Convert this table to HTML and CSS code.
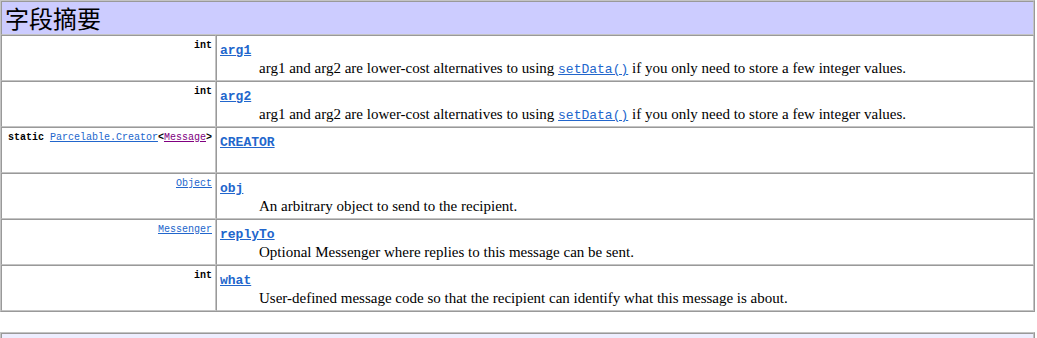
FILE: index.html
```html
<!DOCTYPE html>
<html lang="zh">
<head>
<meta charset="utf-8">
<title>字段摘要</title>
<link rel="stylesheet" href="styles.css">
</head>
<body>
<table class="summary">
  <tr class="head">
    <th colspan="2">字段摘要</th>
  </tr>
  <tr>
    <td class="type"><code class="kw">int</code></td>
    <td class="member">
      <code class="name"><a href="#">arg1</a></code>
      <div class="desc">arg1 and arg2 are lower-cost alternatives to using <code><a href="#">setData()</a></code> if you only need to store a few integer values.</div>
    </td>
  </tr>
  <tr>
    <td class="type"><code class="kw">int</code></td>
    <td class="member">
      <code class="name"><a href="#">arg2</a></code>
      <div class="desc">arg1 and arg2 are lower-cost alternatives to using <code><a href="#">setData()</a></code> if you only need to store a few integer values.</div>
    </td>
  </tr>
  <tr>
    <td class="type"><code><span class="kw">static </span><a href="#">Parcelable.Creator</a><span class="kw">&lt;</span><a href="#" class="visited">Message</a><span class="kw">&gt;</span></code></td>
    <td class="member">
      <code class="name"><a href="#">CREATOR</a></code>
      <div class="desc">&nbsp;</div>
    </td>
  </tr>
  <tr>
    <td class="type"><code><a href="#">Object</a></code></td>
    <td class="member">
      <code class="name"><a href="#">obj</a></code>
      <div class="desc">An arbitrary object to send to the recipient.</div>
    </td>
  </tr>
  <tr>
    <td class="type"><code><a href="#">Messenger</a></code></td>
    <td class="member">
      <code class="name"><a href="#">replyTo</a></code>
      <div class="desc">Optional Messenger where replies to this message can be sent.</div>
    </td>
  </tr>
  <tr>
    <td class="type"><code class="kw">int</code></td>
    <td class="member">
      <code class="name"><a href="#">what</a></code>
      <div class="desc">User-defined message code so that the recipient can identify what this message is about.</div>
    </td>
  </tr>
</table>

<table class="summary next">
  <tr class="head">
    <th>&nbsp;</th>
  </tr>
</table>
</body>
</html>
```

FILE: styles.css
```css
html, body {
  margin: 0;
  padding: 0;
  background: #ffffff;
}

body {
  font-family: "Liberation Serif", "Noto Sans CJK SC", serif;
  color: #000000;
}

.summary {
  width: 1035px;
  border-collapse: separate;
  border-spacing: 0;
  border-style: solid;
  border-width: 1px;
  border-color: #c4c4c4 #999999 #999999 #c4c4c4;
}

.summary th,
.summary td {
  border-style: solid;
  border-width: 1px;
  border-color: #999999 #c4c4c4 #c4c4c4 #999999;
  padding: 3px;
}

.head th {
  background: #ccccff;
  text-align: left;
  font-family: "Noto Sans CJK SC", sans-serif;
  font-weight: normal;
  font-size: 24px;
  line-height: 26px;
}

.type {
  width: 207px;
  text-align: right;
  vertical-align: top;
  font-size: 10px;
  line-height: 12px;
}

.type code {
  font-family: "Liberation Mono", monospace;
  font-size: 10px;
  line-height: 10px;
  white-space: nowrap;
}

.kw {
  font-weight: bold;
}

.summary td.member {
  vertical-align: top;
  font-size: 15px;
  line-height: 19px;
  padding-bottom: 2px;
}

.member code {
  line-height: 13px;
}

.name {
  display: inline-block;
  padding-top: 2px;
  vertical-align: -1px;
  font-family: "Liberation Mono", monospace;
  font-size: 13px;
  font-weight: bold;
}

.desc {
  padding-top: 1px;
  padding-left: 39px;
}

.desc code {
  font-family: "Liberation Mono", monospace;
  font-size: 13px;
}

a {
  color: #2266cc;
  text-decoration: underline;
}

a.visited {
  color: #800080;
}

.next {
  margin-top: 20px;
}

.next .head th {
  background: #eeeeff;
}
```
